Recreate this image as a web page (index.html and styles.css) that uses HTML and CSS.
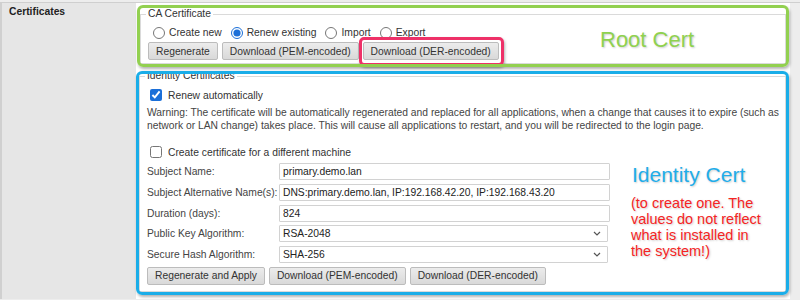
FILE: index.html
```html
<!DOCTYPE html>
<html lang="en">
<head>
    <meta charset="UTF-8">
    <meta name="viewport" content="width=device-width, initial-scale=1.0">
    <title>Certificates</title>
    <link rel="stylesheet" href="styles.css">
</head>
<body>
    <div class="row">
        <div class="row-label">Certificates</div>
        <div class="row-value">

            <!-- CA certificate -->
            <div class="note-box note-green">
                <fieldset class="group group-ca">
                    <legend>CA Certificate</legend>
                    <div class="options">
                        <label class="opt"><input type="radio" name="ca-mode"><span>Create new</span></label>
                        <label class="opt"><input type="radio" name="ca-mode" checked><span>Renew existing</span></label>
                        <label class="opt"><input type="radio" name="ca-mode"><span>Import</span></label>
                        <label class="opt"><input type="radio" name="ca-mode"><span>Export</span></label>
                    </div>
                    <div class="buttons">
                        <button type="button">Regenerate</button>
                        <button type="button">Download (PEM-encoded)</button>
                        <span class="note-pink"><button type="button">Download (DER-encoded)</button></span>
                    </div>
                </fieldset>
                <div class="note-text note-root">Root Cert</div>
            </div>

            <!-- Identity certificates -->
            <div class="note-box note-blue">
                <fieldset class="group group-id">
                    <legend>Identity Certificates</legend>
                    <label class="check"><input type="checkbox" checked><span>Renew automatically</span></label>
                    <p class="warning">Warning: The certificate will be automatically regenerated and replaced for all applications, when a change that causes it to expire (such as network or LAN change) takes place. This will cause all applications to restart, and you will be redirected to the login page.</p>
                    <label class="check check-machine"><input type="checkbox"><span>Create certificate for a different machine</span></label>

                    <div class="form">
                        <div class="form-row">
                            <label for="subject">Subject Name:</label>
                            <input class="field" type="text" id="subject" value="primary.demo.lan">
                        </div>
                        <div class="form-row">
                            <label for="san">Subject Alternative Name(s):</label>
                            <input class="field" type="text" id="san" value="DNS:primary.demo.lan, IP:192.168.42.20, IP:192.168.43.20">
                        </div>
                        <div class="form-row">
                            <label for="duration">Duration (days):</label>
                            <input class="field" type="text" id="duration" value="824">
                        </div>
                        <div class="form-row">
                            <label for="keyalg">Public Key Algorithm:</label>
                            <span class="select-wrap">
                                <select class="field" id="keyalg">
                                    <option>RSA-2048</option>
                                    <option>RSA-4096</option>
                                </select>
                                <svg class="chevron" width="8" height="5" viewBox="0 0 8 5"><path d="M1 1l3 3 3-3" fill="none" stroke="#555" stroke-width="1.2"/></svg>
                            </span>
                        </div>
                        <div class="form-row">
                            <label for="hashalg">Secure Hash Algorithm:</label>
                            <span class="select-wrap">
                                <select class="field" id="hashalg">
                                    <option>SHA-256</option>
                                    <option>SHA-384</option>
                                </select>
                                <svg class="chevron" width="8" height="5" viewBox="0 0 8 5"><path d="M1 1l3 3 3-3" fill="none" stroke="#555" stroke-width="1.2"/></svg>
                            </span>
                        </div>
                    </div>

                    <div class="buttons buttons-id">
                        <button type="button">Regenerate and Apply</button>
                        <button type="button">Download (PEM-encoded)</button>
                        <button type="button">Download (DER-encoded)</button>
                    </div>
                </fieldset>
                <div class="note-text note-identity">Identity Cert</div>
                <div class="note-text note-warning">(to create one. The<br>values do not reflect<br>what is installed in<br>the system!)</div>
            </div>

        </div>
    </div>
</body>
</html>
```

FILE: styles.css
```css
* {
    box-sizing: border-box;
}

body {
    margin: 0;
    font-family: 'Liberation Sans', Arial, sans-serif;
    font-size: 10.3px;
    color: #333;
    background-color: #ededed;
}

.row {
    display: flex;
    margin-top: 2px;
    border-top: 1px solid #cfcfcf;
    height: 297px;
}

.row-label {
    width: 136px;
    padding: 3px 0 0 7px;
    background: #e6e6e6;
    border-left: 2px solid #d0d0d0;
    font-weight: bold;
    line-height: 12px;
    color: #222;
}

.row-value {
    width: 654px;
    padding-top: 2px;
    background: #fff;
}

/* annotation frames drawn over the form */
.note-box {
    position: relative;
    padding: 3px;
}

.note-box::after {
    content: "";
    position: absolute;
    top: 0;
    left: 0;
    right: 0;
    bottom: 0;
    border: 3px solid;
    border-radius: 6px;
    box-shadow: 1px 2px 3px rgba(0, 0, 0, 0.3);
    pointer-events: none;
}

.note-green {
    margin-left: 1px;
    width: 652px;
}

.note-green::after {
    border-color: #92d050;
}

.note-blue {
    margin-top: 4px;
    width: 653px;
}

.note-blue::after {
    border-color: #1aade8;
}

.note-pink {
    position: relative;
    display: inline-block;
}

.note-pink::after {
    content: "";
    position: absolute;
    top: -5px;
    left: -4px;
    right: -5px;
    bottom: -6px;
    border: 3px solid #ee3168;
    border-radius: 5px;
    box-shadow: 1px 2px 3px rgba(0, 0, 0, 0.3);
    pointer-events: none;
}

.note-text {
    position: absolute;
    font-family: 'Liberation Sans', Arial, sans-serif;
    text-shadow: 1px 1px 2px rgba(0, 0, 0, 0.2);
}

.note-root {
    left: 463px;
    top: 24px;
    font-size: 22px;
    line-height: 22px;
    color: #8fd14f;
}

.note-identity {
    left: 496px;
    top: 93px;
    font-size: 21px;
    line-height: 21px;
    color: #1fadea;
}

.note-warning {
    left: 495px;
    top: 124px;
    font-size: 14.5px;
    line-height: 16px;
    color: #f52424;
}

/* fieldsets */
.group {
    margin: 0;
    padding: 0 6px 3px 7px;
    border: 1px solid #dadada;
    min-width: 0;
}

.group legend {
    padding: 0 2px;
    margin-left: -2px;
    line-height: 12px;
    color: #333;
}

.group-id {
    margin-top: -4px;
    padding-bottom: 6px;
}

.options {
    display: flex;
    align-items: center;
    height: 17px;
    margin-top: 4px;
}

.opt {
    display: flex;
    align-items: center;
    margin-right: 4px;
    color: #333;
}

.opt input {
    width: 12px;
    height: 12px;
    margin: 0 4px 0 5px;
    accent-color: #1b6fd8;
}

.buttons {
    display: flex;
    gap: 4px;
    margin-top: 1px;
}

.buttons button {
    height: 18px;
    padding: 0 7px;
    font-family: inherit;
    font-size: 10.3px;
    color: #333;
    background: linear-gradient(#ececec, #d9d9d9);
    border: 1px solid #bcbcbc;
    border-radius: 2px;
}

.buttons-id {
    margin-top: 3.75px;
}

.check {
    display: flex;
    align-items: center;
    height: 14px;
    margin-top: 6px;
    color: #333;
}

.check input {
    width: 12px;
    height: 12px;
    margin: 0 6px 0 3px;
    accent-color: #1b6fd8;
}

.check-machine {
    margin-top: 13px;
}

.warning {
    margin: 4px 0 0;
    line-height: 13px;
    color: #444;
}

.form {
    display: flex;
    flex-direction: column;
    gap: 3.75px;
    margin-top: 4px;
}

.form-row {
    display: flex;
    align-items: center;
    height: 17px;
}

.form-row label {
    width: 132px;
    color: #444;
}

.field {
    width: 331px;
    height: 17px;
    padding: 0 3px;
    font-family: inherit;
    font-size: 10.3px;
    color: #222;
    background: #fff;
    border: 1px solid #d2d2d2;
    border-radius: 1px;
    outline: none;
}

.select-wrap {
    position: relative;
    display: inline-block;
    height: 17px;
}

.select-wrap select {
    width: 329px;
    appearance: none;
}

.chevron {
    position: absolute;
    right: 7px;
    top: 6px;
}
```
